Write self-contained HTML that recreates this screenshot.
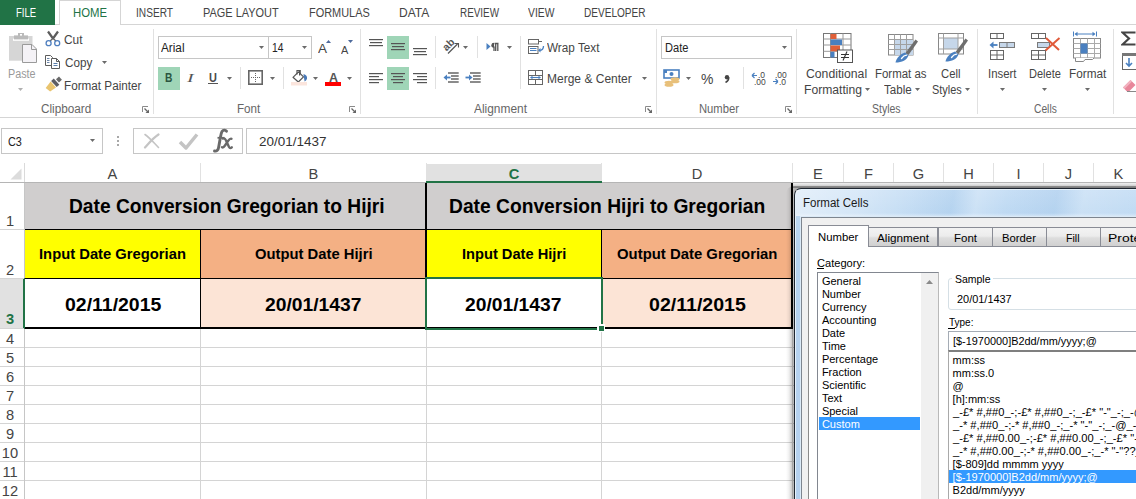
<!DOCTYPE html><html><head><meta charset="utf-8"><style>
html,body{margin:0;padding:0;width:1136px;height:499px;overflow:hidden;background:#fff;font-family:"Liberation Sans",sans-serif;}
.t{position:absolute;white-space:nowrap;line-height:1;}
.r{position:absolute;box-sizing:border-box;}
</style></head><body>
<div class="r" style="left:0px;top:24px;width:1136px;height:1px;background:#d5d5d5"></div>
<div class="r" style="left:0px;top:0px;width:55px;height:25px;background:#217346"></div>
<div class="t" style="left:15.60px;top:7.44px;font-size:12px;color:#fff;font-weight:normal;font-family:'Liberation Sans';transform:scaleX(0.7931);transform-origin:0 0;">FILE</div>
<div class="r" style="left:59px;top:0px;width:62px;height:25px;border:1px solid #d5d5d5;border-bottom:none;background:#fff"></div>
<div class="t" style="left:72.60px;top:7.44px;font-size:12px;color:#217346;font-weight:normal;font-family:'Liberation Sans';transform:scaleX(0.9444);transform-origin:0 0;">HOME</div>
<div class="t" style="left:136.00px;top:7.44px;font-size:12px;color:#444;font-weight:normal;font-family:'Liberation Sans';transform:scaleX(0.8450);transform-origin:0 0;">INSERT</div>
<div class="t" style="left:203.30px;top:7.44px;font-size:12px;color:#444;font-weight:normal;font-family:'Liberation Sans';transform:scaleX(0.9131);transform-origin:0 0;">PAGE LAYOUT</div>
<div class="t" style="left:309.00px;top:7.44px;font-size:12px;color:#444;font-weight:normal;font-family:'Liberation Sans';transform:scaleX(0.9119);transform-origin:0 0;">FORMULAS</div>
<div class="t" style="left:399.40px;top:7.44px;font-size:12px;color:#444;font-weight:normal;font-family:'Liberation Sans';transform:scaleX(1.0024);transform-origin:0 0;">DATA</div>
<div class="t" style="left:459.60px;top:7.44px;font-size:12px;color:#444;font-weight:normal;font-family:'Liberation Sans';transform:scaleX(0.8238);transform-origin:0 0;">REVIEW</div>
<div class="t" style="left:528.20px;top:7.44px;font-size:12px;color:#444;font-weight:normal;font-family:'Liberation Sans';transform:scaleX(0.8607);transform-origin:0 0;">VIEW</div>
<div class="t" style="left:584.30px;top:7.44px;font-size:12px;color:#444;font-weight:normal;font-family:'Liberation Sans';transform:scaleX(0.8384);transform-origin:0 0;">DEVELOPER</div>
<div class="r" style="left:0px;top:117px;width:1136px;height:1px;background:#d5d5d5"></div>
<div class="r" style="left:153px;top:29px;width:1px;height:85px;background:#e1e1e1"></div>
<div class="r" style="left:360px;top:29px;width:1px;height:85px;background:#e1e1e1"></div>
<div class="r" style="left:656px;top:29px;width:1px;height:85px;background:#e1e1e1"></div>
<div class="r" style="left:796px;top:29px;width:1px;height:85px;background:#e1e1e1"></div>
<div class="r" style="left:977px;top:29px;width:1px;height:85px;background:#e1e1e1"></div>
<div class="r" style="left:1113px;top:29px;width:1px;height:85px;background:#e1e1e1"></div>
<div class="r" style="left:240px;top:67px;width:1px;height:22px;background:#e1e1e1"></div>
<div class="r" style="left:283px;top:67px;width:1px;height:22px;background:#e1e1e1"></div>
<div class="r" style="left:435px;top:36px;width:1px;height:22px;background:#e1e1e1"></div>
<div class="r" style="left:435px;top:67px;width:1px;height:22px;background:#e1e1e1"></div>
<div class="r" style="left:477px;top:36px;width:1px;height:22px;background:#e1e1e1"></div>
<div class="r" style="left:520px;top:36px;width:1px;height:53px;background:#e1e1e1"></div>
<div class="r" style="left:743px;top:67px;width:1px;height:22px;background:#e1e1e1"></div>
<div class="t" style="left:41.40px;top:103.44px;font-size:12px;color:#666;font-weight:normal;font-family:'Liberation Sans';transform:scaleX(0.9774);transform-origin:0 0;">Clipboard</div>
<div class="t" style="left:237.30px;top:103.44px;font-size:12px;color:#666;font-weight:normal;font-family:'Liberation Sans';transform:scaleX(0.9703);transform-origin:0 0;">Font</div>
<div class="t" style="left:474.00px;top:103.44px;font-size:12px;color:#666;font-weight:normal;font-family:'Liberation Sans';transform:scaleX(0.9932);transform-origin:0 0;">Alignment</div>
<div class="t" style="left:698.60px;top:103.44px;font-size:12px;color:#666;font-weight:normal;font-family:'Liberation Sans';transform:scaleX(0.9371);transform-origin:0 0;">Number</div>
<div class="t" style="left:872.10px;top:103.44px;font-size:12px;color:#666;font-weight:normal;font-family:'Liberation Sans';transform:scaleX(0.8753);transform-origin:0 0;">Styles</div>
<div class="t" style="left:1033.60px;top:103.44px;font-size:12px;color:#666;font-weight:normal;font-family:'Liberation Sans';transform:scaleX(0.8547);transform-origin:0 0;">Cells</div>
<svg class="r" style="left:142px;top:106px" width="8" height="8" viewBox="0 0 8 8"><path d="M0.5 6V0.5H6" fill="none" stroke="#8a8a8a"/><path d="M2.5 2.5L6.5 6.5" stroke="#666" stroke-width="1.2"/><path d="M3.5 7H7V3.5Z" fill="#666"/></svg>
<svg class="r" style="left:349px;top:106px" width="8" height="8" viewBox="0 0 8 8"><path d="M0.5 6V0.5H6" fill="none" stroke="#8a8a8a"/><path d="M2.5 2.5L6.5 6.5" stroke="#666" stroke-width="1.2"/><path d="M3.5 7H7V3.5Z" fill="#666"/></svg>
<svg class="r" style="left:645px;top:106px" width="8" height="8" viewBox="0 0 8 8"><path d="M0.5 6V0.5H6" fill="none" stroke="#8a8a8a"/><path d="M2.5 2.5L6.5 6.5" stroke="#666" stroke-width="1.2"/><path d="M3.5 7H7V3.5Z" fill="#666"/></svg>
<svg class="r" style="left:785px;top:106px" width="8" height="8" viewBox="0 0 8 8"><path d="M0.5 6V0.5H6" fill="none" stroke="#8a8a8a"/><path d="M2.5 2.5L6.5 6.5" stroke="#666" stroke-width="1.2"/><path d="M3.5 7H7V3.5Z" fill="#666"/></svg>
<svg class="r" style="left:8px;top:32px" width="30" height="32" viewBox="0 0 30 32"><rect x="1" y="4" width="23.5" height="24.7" fill="#d6d6d6"/>
<rect x="5" y="6.6" width="16" height="2.2" fill="#fff"/>
<rect x="6" y="3.4" width="14" height="4" fill="#bababa"/><rect x="10" y="1" width="6" height="3" fill="#bababa"/><rect x="12" y="2" width="2" height="1.6" fill="#fff"/>
<path d="M14.5 12.5H24L28.5 17V30.5H14.5Z" fill="#f4f2f6" stroke="#9a9a9a"/><path d="M23.5 12.5V17.5H28.5" fill="none" stroke="#9a9a9a"/></svg>
<div class="t" style="left:7.60px;top:67.84px;font-size:12px;color:#9a9a9a;font-weight:normal;font-family:'Liberation Sans';transform:scaleX(0.8995);transform-origin:0 0;">Paste</div>
<svg class="r" style="left:18.0px;top:87.5px" width="5" height="3" viewBox="0 0 5 3"><path d="M0 0H5L2.5 3Z" fill="#b0b0b0"/></svg>
<svg class="r" style="left:45px;top:30px" width="16" height="17" viewBox="0 0 16 17"><path d="M3 1.5L8 8.5M13 1.5L8 8.5" stroke="#5c5c5c" stroke-width="2.2" fill="none"/>
<path d="M8 8.5L5 11M8 8.5L11 11" stroke="#5c5c5c" stroke-width="1.2"/>
<circle cx="3.6" cy="13.2" r="2.5" fill="none" stroke="#4f7fbf" stroke-width="1.3"/><circle cx="12.2" cy="13.2" r="2.5" fill="none" stroke="#4f7fbf" stroke-width="1.3"/></svg>
<div class="t" style="left:64.40px;top:34.44px;font-size:12px;color:#444;font-weight:normal;font-family:'Liberation Sans';transform:scaleX(0.9908);transform-origin:0 0;">Cut</div>
<svg class="r" style="left:44px;top:54px" width="17" height="16" viewBox="0 0 17 16"><path d="M1.5 1.5H6.5L8.5 3.5V11.5H1.5Z" fill="#fff" stroke="#5c5c5c"/>
<path d="M3 4.5H5.5M3 6.5H5.5M3 8.5H5.5" stroke="#6d86a8"/>
<path d="M7.5 4.5H12.5L15.5 7.5V14.5H7.5Z" fill="#fff" stroke="#5c5c5c"/><path d="M12.5 4.5V7.5H15.5" fill="none" stroke="#5c5c5c"/>
<path d="M9.5 9.5H13.5M9.5 11.5H13.5" stroke="#5a7eaa"/></svg>
<div class="t" style="left:64.60px;top:57.00px;font-size:12.4px;color:#444;font-weight:normal;font-family:'Liberation Sans';transform:scaleX(0.9433);transform-origin:0 0;">Copy</div>
<svg class="r" style="left:102.0px;top:60.7px" width="5" height="3" viewBox="0 0 5 3"><path d="M0 0H5L2.5 3Z" fill="#6a6a6a"/></svg>
<svg class="r" style="left:42px;top:76px" width="22" height="18" viewBox="0 0 22 18"><g transform="translate(12.8 7.2) rotate(-42)"><path d="M-10 -2.5L-2 -4V4L-9 3Z" fill="#e9c46f"/><rect x="-1.2" y="-4.2" width="3.6" height="8.4" fill="#5d5d63"/><rect x="3.6" y="-2.2" width="4" height="4.4" fill="#6a6a6a"/></g></svg>
<div class="t" style="left:64.40px;top:80.24px;font-size:12px;color:#444;font-weight:normal;font-family:'Liberation Sans';transform:scaleX(0.9766);transform-origin:0 0;">Format Painter</div>
<div class="r" style="left:158px;top:36px;width:111px;height:23px;border:1px solid #c6c6c6;background:#fff"></div>
<div class="r" style="left:268px;top:36px;width:44px;height:23px;border:1px solid #c6c6c6;background:#fff"></div>
<div class="t" style="left:160.90px;top:42.24px;font-size:12px;color:#222;font-weight:normal;font-family:'Liberation Sans';transform:scaleX(0.9787);transform-origin:0 0;">Arial</div>
<div class="t" style="left:271.80px;top:42.24px;font-size:12px;color:#222;font-weight:normal;font-family:'Liberation Sans';transform:scaleX(0.8543);transform-origin:0 0;">14</div>
<svg class="r" style="left:259.0px;top:46.0px" width="5" height="3" viewBox="0 0 5 3"><path d="M0 0H5L2.5 3Z" fill="#6a6a6a"/></svg>
<svg class="r" style="left:302.0px;top:46.0px" width="5" height="3" viewBox="0 0 5 3"><path d="M0 0H5L2.5 3Z" fill="#6a6a6a"/></svg>
<div class="t" style="left:318.40px;top:41.97px;font-size:13.5px;color:#444;font-weight:normal;font-family:'Liberation Sans';transform:scaleX(0.9995);transform-origin:0 0;">A</div>
<svg class="r" style="left:326px;top:40px" width="5" height="3" viewBox="0 0 5 3"><path d="M0 3H5L2.5 0Z" fill="#4e6a9c"/></svg>
<div class="t" style="left:341.20px;top:44.51px;font-size:10.5px;color:#444;font-weight:normal;font-family:'Liberation Sans';transform:scaleX(1.0423);transform-origin:0 0;">A</div>
<svg class="r" style="left:348px;top:40px" width="5" height="3" viewBox="0 0 5 3"><path d="M0 0H5L2.5 3Z" fill="#4e6a9c"/></svg>
<div class="r" style="left:158px;top:67px;width:22px;height:23px;background:#9fd5b7"></div>
<div class="t" style="left:164.70px;top:71.52px;font-size:12.5px;color:#2b5540;font-weight:bold;font-family:'Liberation Sans';transform:scaleX(0.8199);transform-origin:0 0;">B</div>
<div class="t" style="left:187.20px;top:71.52px;font-size:12.5px;color:#555;font-weight:normal;font-family:'Liberation Serif';transform:scaleX(1.6096);transform-origin:0 0;font-style:italic">I</div>
<div class="t" style="left:208.50px;top:71.52px;font-size:12.5px;color:#4a4a4a;font-weight:bold;font-family:'Liberation Sans';transform:scaleX(0.8753);transform-origin:0 0;">U</div>
<div class="r" style="left:207.5px;top:83px;width:10px;height:1px;background:#555"></div>
<svg class="r" style="left:226.9px;top:76.5px" width="5" height="3" viewBox="0 0 5 3"><path d="M0 0H5L2.5 3Z" fill="#6a6a6a"/></svg>
<svg class="r" style="left:247px;top:69px" width="17" height="17" viewBox="0 0 17 17"><rect x="1.8" y="1.8" width="13.4" height="13.4" fill="none" stroke="#666" stroke-width="1.6"/><path d="M8.5 4V13M4 8.5H13" stroke="#666" stroke-dasharray="1 1"/></svg>
<svg class="r" style="left:270.0px;top:76.5px" width="5" height="3" viewBox="0 0 5 3"><path d="M0 0H5L2.5 3Z" fill="#6a6a6a"/></svg>
<svg class="r" style="left:290px;top:66px" width="19" height="20" viewBox="0 0 19 20"><path d="M3 11.3L8.5 5.8L13.5 10.8L8.3 16Z" fill="#fff" stroke="#555" stroke-width="1.2" stroke-linejoin="round"/>
<path d="M7 8.5V4.5H10.2V8M9.6 4.5V9.5" stroke="#555" stroke-width="1.2" fill="none"/>
<path d="M13.5 8C16 8.5 17.5 10.5 17 12.5C16.6 14 15.6 15 14.6 15.5L13.8 10.8Z" fill="#4a7ab8"/>
<rect x="1" y="16" width="16" height="3.5" fill="#fbe5dd"/></svg>
<svg class="r" style="left:313.1px;top:76.5px" width="5" height="3" viewBox="0 0 5 3"><path d="M0 0H5L2.5 3Z" fill="#6a6a6a"/></svg>
<div class="t" style="left:328.70px;top:71.52px;font-size:12.5px;color:#555;font-weight:bold;font-family:'Liberation Sans';transform:scaleX(0.9972);transform-origin:0 0;">A</div>
<div class="r" style="left:325px;top:82px;width:16px;height:4px;background:#ff0000"></div>
<svg class="r" style="left:347.0px;top:76.5px" width="5" height="3" viewBox="0 0 5 3"><path d="M0 0H5L2.5 3Z" fill="#6a6a6a"/></svg>
<div class="r" style="left:387px;top:36px;width:22px;height:23px;background:#9fd5b7"></div>
<div class="r" style="left:387px;top:67px;width:22px;height:23px;background:#9fd5b7"></div>
<svg class="r" style="left:369px;top:39px" width="16" height="14" viewBox="0 0 16 14"><rect x="0" y="0" width="14" height="1.2" fill="#555"/><rect x="1" y="3" width="12" height="1.2" fill="#555"/><rect x="0" y="6" width="14" height="1.2" fill="#555"/></svg>
<svg class="r" style="left:391px;top:43px" width="16" height="14" viewBox="0 0 16 14"><rect x="0" y="0" width="14" height="1.2" fill="#555"/><rect x="1" y="3" width="12" height="1.2" fill="#555"/><rect x="0" y="6" width="14" height="1.2" fill="#555"/></svg>
<svg class="r" style="left:413px;top:48px" width="16" height="14" viewBox="0 0 16 14"><rect x="0" y="0" width="14" height="1.2" fill="#555"/><rect x="1" y="3" width="12" height="1.2" fill="#555"/><rect x="0" y="6" width="14" height="1.2" fill="#555"/></svg>
<svg class="r" style="left:369px;top:73px" width="16" height="14" viewBox="0 0 16 14"><rect x="0" y="0" width="14" height="1.2" fill="#555"/><rect x="0" y="3" width="10" height="1.2" fill="#555"/><rect x="0" y="6" width="14" height="1.2" fill="#555"/><rect x="0" y="9" width="10" height="1.2" fill="#555"/></svg>
<svg class="r" style="left:391px;top:73px" width="16" height="14" viewBox="0 0 16 14"><rect x="0" y="0" width="14" height="1.2" fill="#555"/><rect x="2" y="3" width="10" height="1.2" fill="#555"/><rect x="0" y="6" width="14" height="1.2" fill="#555"/><rect x="2" y="9" width="10" height="1.2" fill="#555"/></svg>
<svg class="r" style="left:413px;top:73px" width="16" height="14" viewBox="0 0 16 14"><rect x="0" y="0" width="14" height="1.2" fill="#555"/><rect x="4" y="3" width="10" height="1.2" fill="#555"/><rect x="0" y="6" width="14" height="1.2" fill="#555"/><rect x="4" y="9" width="10" height="1.2" fill="#555"/></svg>
<svg class="r" style="left:442px;top:38px" width="18" height="17" viewBox="0 0 18 17"><text x="0" y="0" font-size="10.5" font-weight="bold" font-family="Liberation Sans" fill="#555" transform="translate(4.5 13.5) rotate(-45)">ab</text>
<path d="M6 15.5L15.5 6" stroke="#555" stroke-width="1.2"/><path d="M12.5 5.5H16.5V9.5" stroke="#555" stroke-width="1.1" fill="none"/></svg>
<svg class="r" style="left:463.0px;top:46.0px" width="5" height="3" viewBox="0 0 5 3"><path d="M0 0H5L2.5 3Z" fill="#6a6a6a"/></svg>
<svg class="r" style="left:486px;top:42px" width="14" height="10" viewBox="0 0 14 10"><path d="M0.5 1L4.5 4.5L0.5 8Z" fill="#4a80c0"/><path d="M8 1.5C5.5 1.5 5 5 8 5.2V9M8.5 1.5H12.5M9.7 1.5V9M11.8 1.5V9" stroke="#555" stroke-width="1.3" fill="none"/><path d="M8 1.2C5 1.4 5 5.5 8.2 5.4Z" fill="#555"/></svg>
<svg class="r" style="left:507.0px;top:46.0px" width="5" height="3" viewBox="0 0 5 3"><path d="M0 0H5L2.5 3Z" fill="#6a6a6a"/></svg>
<svg class="r" style="left:443px;top:72px" width="17" height="12" viewBox="0 0 17 12"><path d="M5 1H15.7M8 4H15.7M8 7H15.7M5 10H15.7" stroke="#666" stroke-width="1.3"/>
<path d="M0.5 5.5L4 2.5V8.5Z" fill="#4a80c0"/><path d="M3 5.5H7.5" stroke="#4a80c0" stroke-width="1.8"/></svg>
<svg class="r" style="left:465px;top:72px" width="17" height="12" viewBox="0 0 17 12"><path d="M5 1H15.7M8 4H15.7M8 7H15.7M5 10H15.7" stroke="#666" stroke-width="1.3"/>
<path d="M7.5 5.5L4 2.5V8.5Z" fill="#4a80c0"/><path d="M0.5 5.5H5" stroke="#4a80c0" stroke-width="1.8"/></svg>
<svg class="r" style="left:527px;top:38px" width="18" height="17" viewBox="0 0 18 17"><rect x="1.5" y="1.5" width="10" height="4.5" fill="#fff" stroke="#666"/><path d="M11.5 3.5H15" stroke="#666"/>
<rect x="1.5" y="8.5" width="9.5" height="7" fill="#fff" stroke="#666"/><path d="M3 10.5H9.5M3 12.5H9.5" stroke="#4a80c0"/>
<path d="M16.5 8C16.5 11 15 12.3 12.5 12.3" stroke="#4a80c0" stroke-width="1.3" fill="none"/><path d="M11 12.3L13.5 10V14.6Z" fill="#4a80c0"/></svg>
<div class="t" style="left:547.10px;top:42.14px;font-size:12px;color:#444;font-weight:normal;font-family:'Liberation Sans';transform:scaleX(0.9780);transform-origin:0 0;">Wrap Text</div>
<svg class="r" style="left:527px;top:70px" width="17" height="16" viewBox="0 0 17 16"><rect x="1.5" y="0.5" width="14" height="14" fill="#fff" stroke="#666"/><path d="M1.5 5.5H15.5M1.5 9.5H15.5M8.5 0.5V5.5M8.5 9.5V14.5" stroke="#666" fill="none"/>
<path d="M4 7.5H13" stroke="#4a80c0" stroke-width="1.1"/><path d="M3 7.5L5.5 5.8V9.2Z M14 7.5L11.5 5.8V9.2Z" fill="#4a80c0"/></svg>
<div class="t" style="left:547.10px;top:72.94px;font-size:12px;color:#444;font-weight:normal;font-family:'Liberation Sans';transform:scaleX(1.0011);transform-origin:0 0;">Merge &amp; Center</div>
<svg class="r" style="left:641.8px;top:77.0px" width="5" height="3" viewBox="0 0 5 3"><path d="M0 0H5L2.5 3Z" fill="#6a6a6a"/></svg>
<div class="r" style="left:661px;top:36px;width:131px;height:23px;border:1px solid #c6c6c6;background:#fff"></div>
<div class="t" style="left:664.70px;top:42.24px;font-size:12px;color:#222;font-weight:normal;font-family:'Liberation Sans';transform:scaleX(0.9233);transform-origin:0 0;">Date</div>
<svg class="r" style="left:781.8px;top:46.0px" width="5" height="3" viewBox="0 0 5 3"><path d="M0 0H5L2.5 3Z" fill="#6a6a6a"/></svg>
<svg class="r" style="left:663px;top:69px" width="18" height="18" viewBox="0 0 18 18"><rect x="1" y="1" width="15" height="8" fill="#fff" stroke="#4a80c0" stroke-width="1.6"/><circle cx="8.5" cy="5" r="2" fill="#4a80c0"/><rect x="1" y="1" width="3" height="3" fill="#4a80c0"/>
<ellipse cx="12" cy="10" rx="4.5" ry="1.8" fill="#e8c07a"/><ellipse cx="12" cy="12.5" rx="4.5" ry="1.8" fill="#e8c07a"/><ellipse cx="6" cy="13.5" rx="4.5" ry="1.8" fill="#e8c07a"/><ellipse cx="6" cy="16" rx="4.5" ry="1.8" fill="#e8c07a"/></svg>
<svg class="r" style="left:685.5px;top:76.5px" width="5" height="3" viewBox="0 0 5 3"><path d="M0 0H5L2.5 3Z" fill="#6a6a6a"/></svg>
<div class="t" style="left:700.50px;top:72.33px;font-size:14.5px;color:#444;font-weight:normal;font-family:'Liberation Sans';transform:scaleX(0.9619);transform-origin:0 0;">%</div>
<svg class="r" style="left:724px;top:75px" width="6" height="8" viewBox="0 0 6 8"><circle cx="3" cy="2.2" r="2.2" fill="#444"/><path d="M4.8 2.5C4.8 5 3.5 6.5 1.5 7.5" stroke="#444" stroke-width="1.5" fill="none"/></svg>
<svg class="r" style="left:751px;top:71px" width="16" height="14" viewBox="0 0 16 14"><path d="M1 4.5H6M1 4.5L3.5 2M1 4.5L3.5 7" stroke="#4a80c0" stroke-width="1.2" fill="none"/>
<text x="7" y="7" font-size="8.5" font-family="Liberation Sans" fill="#444">.0</text><text x="3" y="13.5" font-size="8.5" font-family="Liberation Sans" fill="#444">.00</text></svg>
<svg class="r" style="left:772px;top:71px" width="16" height="14" viewBox="0 0 16 14"><text x="3" y="7" font-size="8.5" font-family="Liberation Sans" fill="#444">.00</text>
<path d="M1 10.5H6M6 10.5L3.5 8M6 10.5L3.5 13" stroke="#4a80c0" stroke-width="1.2" fill="none"/><text x="7" y="13.5" font-size="8.5" font-family="Liberation Sans" fill="#444">.0</text></svg>
<svg class="r" style="left:822px;top:33px" width="32" height="31" viewBox="0 0 32 31"><rect x="1.5" y="0.5" width="27.5" height="24" fill="#fff" stroke="#777"/>
<path d="M1.5 6H29M1.5 12H29M1.5 18.3H29M8.5 0.5V24.5M21 0.5V24.5" stroke="#999"/>
<rect x="8.5" y="1" width="6" height="5" fill="#e0603a"/><rect x="8.5" y="6.5" width="11.5" height="5.5" fill="#4a80c0"/><rect x="8.5" y="12.5" width="9.5" height="5.8" fill="#e0603a"/><rect x="8.5" y="18.8" width="4" height="5.7" fill="#4a80c0"/>
<rect x="15.5" y="17" width="15" height="12.5" fill="#fff" stroke="#555"/><path d="M19 21.5H27M19 24.5H27M25 18.5L21 27.5" stroke="#333" stroke-width="1.1"/></svg>
<div class="t" style="left:806.30px;top:68.14px;font-size:12px;color:#444;font-weight:normal;font-family:'Liberation Sans';transform:scaleX(1.0177);transform-origin:0 0;">Conditional</div>
<div class="t" style="left:803.50px;top:83.94px;font-size:12px;color:#444;font-weight:normal;font-family:'Liberation Sans';transform:scaleX(1.0114);transform-origin:0 0;">Formatting</div>
<svg class="r" style="left:864.8px;top:88.0px" width="5" height="3" viewBox="0 0 5 3"><path d="M0 0H5L2.5 3Z" fill="#6a6a6a"/></svg>
<svg class="r" style="left:888px;top:34px" width="31" height="30" viewBox="0 0 31 30"><rect x="0.5" y="0.5" width="24.5" height="20.5" fill="#fff" stroke="#888"/><rect x="6.5" y="5.5" width="18.5" height="15.5" fill="#c6d7ea"/>
<path d="M0.5 5.5H25M0.5 10.5H25M0.5 15.5H25M6.5 0.5V21M12.5 0.5V21M18.5 0.5V21" stroke="#a0a0a0"/>
<path d="M17.5 19L27.5 5.5L30 7.5L20.5 21Z" fill="#6e6e6e"/><path d="M7.5 28.5C8.5 24 12 20 17 18.5L20.5 21.5C19 26 14 28.5 7.5 28.5Z" fill="#4a80c0"/><path d="M13.5 24.5C15 22.5 17 21.3 18.5 21.2" stroke="#fff" stroke-width="1.3" fill="none" stroke-linecap="round"/></svg>
<div class="t" style="left:875.30px;top:68.14px;font-size:12px;color:#444;font-weight:normal;font-family:'Liberation Sans';transform:scaleX(0.9535);transform-origin:0 0;">Format as</div>
<div class="t" style="left:884.00px;top:83.94px;font-size:12px;color:#444;font-weight:normal;font-family:'Liberation Sans';transform:scaleX(0.9654);transform-origin:0 0;">Table</div>
<svg class="r" style="left:915.0px;top:88.0px" width="5" height="3" viewBox="0 0 5 3"><path d="M0 0H5L2.5 3Z" fill="#6a6a6a"/></svg>
<svg class="r" style="left:938px;top:33px" width="31" height="31" viewBox="0 0 31 31"><rect x="0.5" y="0.5" width="25" height="20.5" fill="#fff" stroke="#888"/><rect x="5.5" y="5" width="14.5" height="11" fill="#c6d7ea"/>
<path d="M0.5 5H25.5M0.5 16H25.5M5.5 0.5V21M20 0.5V21" stroke="#a0a0a0"/>
<path d="M17.5 19L27.5 5.5L30 7.5L20.5 21Z" fill="#6e6e6e"/><path d="M7.5 28.5C8.5 24 12 20 17 18.5L20.5 21.5C19 26 14 28.5 7.5 28.5Z" fill="#4a80c0"/><path d="M13.5 24.5C15 22.5 17 21.3 18.5 21.2" stroke="#fff" stroke-width="1.3" fill="none" stroke-linecap="round"/></svg>
<div class="t" style="left:941.00px;top:68.14px;font-size:12px;color:#444;font-weight:normal;font-family:'Liberation Sans';transform:scaleX(0.9383);transform-origin:0 0;">Cell</div>
<div class="t" style="left:931.90px;top:83.94px;font-size:12px;color:#444;font-weight:normal;font-family:'Liberation Sans';transform:scaleX(0.9089);transform-origin:0 0;">Styles</div>
<svg class="r" style="left:964.9px;top:88.0px" width="5" height="3" viewBox="0 0 5 3"><path d="M0 0H5L2.5 3Z" fill="#6a6a6a"/></svg>
<svg class="r" style="left:989px;top:33px" width="28" height="28" viewBox="0 0 28 28"><g fill="#fff" stroke="#666"><rect x="1.5" y="0.5" width="13" height="5"/><path d="M8 0.5V5.5"/><rect x="1.5" y="17.5" width="13" height="9"/><path d="M1.5 22H14.5M8 17.5V26.5"/></g>
<rect x="10.5" y="9.5" width="15" height="5" fill="#c6d7ea" stroke="#7a7a7a"/><path d="M18 9.5V14.5" stroke="#7a7a7a"/><path d="M0.5 12L4.5 8.5V15.5Z" fill="#4a80c0"/><path d="M3 12H8.5" stroke="#4a80c0" stroke-width="1.8"/></svg>
<div class="t" style="left:988.00px;top:68.14px;font-size:12px;color:#444;font-weight:normal;font-family:'Liberation Sans';transform:scaleX(0.9496);transform-origin:0 0;">Insert</div>
<svg class="r" style="left:1000.1px;top:88.0px" width="5" height="3" viewBox="0 0 5 3"><path d="M0 0H5L2.5 3Z" fill="#6a6a6a"/></svg>
<svg class="r" style="left:1031px;top:33px" width="30" height="28" viewBox="0 0 30 28"><g fill="#fff" stroke="#666"><rect x="0.5" y="0.5" width="14" height="5"/><path d="M7.5 0.5V5.5"/><rect x="0.5" y="17.5" width="14" height="9"/><path d="M0.5 22H14.5M7.5 17.5V26.5"/></g>
<rect x="6.5" y="9.5" width="12" height="5" fill="#c6d7ea" stroke="#7a7a7a"/><path d="M15 5L28 17M28.5 5L14.5 17.5" stroke="#e05a3a" stroke-width="2"/></svg>
<div class="t" style="left:1028.70px;top:68.14px;font-size:12px;color:#444;font-weight:normal;font-family:'Liberation Sans';transform:scaleX(0.9195);transform-origin:0 0;">Delete</div>
<svg class="r" style="left:1042.0px;top:88.0px" width="5" height="3" viewBox="0 0 5 3"><path d="M0 0H5L2.5 3Z" fill="#6a6a6a"/></svg>
<svg class="r" style="left:1073px;top:31px" width="29" height="32" viewBox="0 0 29 32"><path d="M2.5 3H21.5M0.5 0.5V5.5M23.5 0.5V5.5" stroke="#4a80c0" fill="none"/><path d="M1.5 3L4.5 0.8V5.2Z M22.5 3L19.5 0.8V5.2Z" fill="#4a80c0"/>
<rect x="0.5" y="7.5" width="27" height="19.5" fill="#fff" stroke="#888"/><path d="M0.5 12.5H27.5M0.5 17.5H27.5M0.5 22.5H27.5M7.5 7.5V27M14.5 7.5V27M21.5 7.5V27" stroke="#aaa"/><rect x="7.5" y="12.5" width="7" height="10" fill="#4a80c0"/>
<path d="M2.5 27V30.5H10.5L12 28.5H19.5L21 27" stroke="#888" fill="#fff"/></svg>
<div class="t" style="left:1068.60px;top:68.14px;font-size:12px;color:#444;font-weight:normal;font-family:'Liberation Sans';transform:scaleX(0.9815);transform-origin:0 0;">Format</div>
<svg class="r" style="left:1084.8px;top:88.0px" width="5" height="3" viewBox="0 0 5 3"><path d="M0 0H5L2.5 3Z" fill="#6a6a6a"/></svg>
<svg class="r" style="left:1121px;top:31px" width="15" height="15" viewBox="0 0 15 15"><path d="M14.5 1.5H1.5L8 7.5L1.5 13.5H14.5" stroke="#444" stroke-width="2.2" fill="none" stroke-linejoin="miter"/></svg>
<svg class="r" style="left:1122px;top:53px" width="14" height="17" viewBox="0 0 14 17"><rect x="0.5" y="0.5" width="14" height="16" fill="#fff" stroke="#666"/><rect x="0" y="0" width="14" height="3" fill="#777"/><path d="M7 5V13M4 10L7 13L10 10" stroke="#4a80c0" stroke-width="1.6" fill="none"/></svg>
<svg class="r" style="left:1121px;top:77px" width="15" height="15" viewBox="0 0 15 15"><path d="M2 10.5L9.5 3L14.5 8L7 15.5Z" fill="#e8869a"/><path d="M2 10.5L9.5 3L11 4.5L3.5 12Z" fill="#f2b3c0"/><path d="M6 14.5H15" stroke="#888"/></svg>
<div class="r" style="left:1px;top:128px;width:102px;height:26px;border:1px solid #c6c6c6;background:#fff"></div>
<div class="t" style="left:8.40px;top:136.44px;font-size:12px;color:#222;font-weight:normal;font-family:'Liberation Sans';transform:scaleX(0.9064);transform-origin:0 0;">C3</div>
<svg class="r" style="left:90.0px;top:138.5px" width="5" height="3" viewBox="0 0 5 3"><path d="M0 0H5L2.5 3Z" fill="#6a6a6a"/></svg>
<div class="r" style="left:117px;top:136px;width:2px;height:2px;background:#a8a8a8"></div>
<div class="r" style="left:117px;top:140px;width:2px;height:2px;background:#a8a8a8"></div>
<div class="r" style="left:117px;top:144px;width:2px;height:2px;background:#a8a8a8"></div>
<div class="r" style="left:133px;top:128px;width:110px;height:26px;border:1px solid #c6c6c6;background:#fff"></div>
<svg class="r" style="left:143px;top:133px" width="18" height="17" viewBox="0 0 18 17"><path d="M2 14.5C6 10 10 5 15.5 1.5" stroke="#c4c4c4" stroke-width="2.2" fill="none" stroke-linecap="round"/><path d="M2 1.5C7 5 11 10 15.5 14.5" stroke="#c4c4c4" stroke-width="1.6" fill="none" stroke-linecap="round"/></svg>
<svg class="r" style="left:178px;top:133px" width="21" height="17" viewBox="0 0 21 17"><path d="M2 9L8 15L19 1.5" stroke="#c4c4c4" stroke-width="3.5" fill="none" stroke-linejoin="round"/></svg>
<svg class="r" style="left:212px;top:128px" width="22" height="25" viewBox="0 0 22 25"><path d="M14.5 3.2C13.5 1.8 11.2 1.6 10 3.5C9.2 4.8 8.8 7 8.4 9.5L6.6 19.5C6.2 21.8 5 23.5 2.5 23" stroke="#6a6a6a" stroke-width="2.9" fill="none" stroke-linecap="round"/><path d="M5.5 9.8H12.5" stroke="#6a6a6a" stroke-width="1.8"/><path d="M11 10.5C12.5 10 13.5 11 14.5 13.5L17 19C17.8 20.5 18.8 20.2 19.8 19.3M19.5 10.8C18.5 10.3 17.5 11 16 13L13 17.5C12 19 11 19.8 10 19.2" stroke="#6a6a6a" stroke-width="2.4" fill="none" stroke-linecap="round"/></svg>
<div class="r" style="left:246px;top:128px;width:900px;height:26px;border:1px solid #c6c6c6;background:#fff"></div>
<div class="t" style="left:258.50px;top:134.64px;font-size:13.3px;color:#333;font-weight:normal;font-family:'Liberation Sans';transform:scaleX(1.0140);transform-origin:0 0;">20/01/1437</div>
<div class="r" style="left:24px;top:163px;width:1px;height:20px;background:#dadada"></div>
<div class="r" style="left:24px;top:183px;width:1px;height:316px;background:#c6c6c6"></div>
<div class="r" style="left:0px;top:182px;width:1136px;height:1px;background:#b5b5b5"></div>
<svg class="r" style="left:10px;top:168px" width="12" height="12" viewBox="0 0 12 12"><path d="M11.5 0.5V11.5H0.5Z" fill="#dcdcdc"/></svg>
<div class="r" style="left:427px;top:164px;width:175px;height:17px;background:#e1e1e1"></div>
<div class="r" style="left:200px;top:163px;width:1px;height:19px;background:#e1e1e1"></div>
<div class="r" style="left:426px;top:163px;width:1px;height:19px;background:#e1e1e1"></div>
<div class="r" style="left:601px;top:163px;width:1px;height:19px;background:#e1e1e1"></div>
<div class="r" style="left:792px;top:163px;width:1px;height:19px;background:#e1e1e1"></div>
<div class="r" style="left:843px;top:163px;width:1px;height:19px;background:#e1e1e1"></div>
<div class="r" style="left:893px;top:163px;width:1px;height:19px;background:#e1e1e1"></div>
<div class="r" style="left:943px;top:163px;width:1px;height:19px;background:#e1e1e1"></div>
<div class="r" style="left:993px;top:163px;width:1px;height:19px;background:#e1e1e1"></div>
<div class="r" style="left:1043px;top:163px;width:1px;height:19px;background:#e1e1e1"></div>
<div class="r" style="left:1093px;top:163px;width:1px;height:19px;background:#e1e1e1"></div>
<div class="r" style="left:426px;top:181px;width:176px;height:2px;background:#217346"></div>
<div class="t" style="left:-187.5px;width:600px;text-align:center;top:166.68px;font-size:14.67px;color:#444;font-weight:normal;font-family:'Liberation Sans';">A</div>
<div class="t" style="left:13.5px;width:600px;text-align:center;top:166.68px;font-size:14.67px;color:#444;font-weight:normal;font-family:'Liberation Sans';">B</div>
<div class="t" style="left:214.0px;width:600px;text-align:center;top:166.68px;font-size:14.67px;color:#217346;font-weight:bold;font-family:'Liberation Sans';">C</div>
<div class="t" style="left:397.0px;width:600px;text-align:center;top:166.68px;font-size:14.67px;color:#444;font-weight:normal;font-family:'Liberation Sans';">D</div>
<div class="t" style="left:518.0px;width:600px;text-align:center;top:166.68px;font-size:14.67px;color:#444;font-weight:normal;font-family:'Liberation Sans';">E</div>
<div class="t" style="left:568.5px;width:600px;text-align:center;top:166.68px;font-size:14.67px;color:#444;font-weight:normal;font-family:'Liberation Sans';">F</div>
<div class="t" style="left:618.5px;width:600px;text-align:center;top:166.68px;font-size:14.67px;color:#444;font-weight:normal;font-family:'Liberation Sans';">G</div>
<div class="t" style="left:668.5px;width:600px;text-align:center;top:166.68px;font-size:14.67px;color:#444;font-weight:normal;font-family:'Liberation Sans';">H</div>
<div class="t" style="left:718.5px;width:600px;text-align:center;top:166.68px;font-size:14.67px;color:#444;font-weight:normal;font-family:'Liberation Sans';">I</div>
<div class="t" style="left:768.5px;width:600px;text-align:center;top:166.68px;font-size:14.67px;color:#444;font-weight:normal;font-family:'Liberation Sans';">J</div>
<div class="t" style="left:818.5px;width:600px;text-align:center;top:166.68px;font-size:14.67px;color:#444;font-weight:normal;font-family:'Liberation Sans';">K</div>
<div class="r" style="left:0px;top:279px;width:23px;height:49px;background:#e1e1e1"></div>
<div class="r" style="left:23px;top:278px;width:2px;height:51px;background:#217346"></div>
<div class="r" style="left:0px;top:229px;width:24px;height:1px;background:#d4d4d4"></div>
<div class="t" style="left:-290px;width:600px;text-align:center;top:213.68px;font-size:14.67px;color:#444;font-weight:normal;font-family:'Liberation Sans';">1</div>
<div class="r" style="left:0px;top:278px;width:24px;height:1px;background:#d4d4d4"></div>
<div class="t" style="left:-290px;width:600px;text-align:center;top:262.68px;font-size:14.67px;color:#444;font-weight:normal;font-family:'Liberation Sans';">2</div>
<div class="r" style="left:0px;top:328px;width:24px;height:1px;background:#d4d4d4"></div>
<div class="t" style="left:-290px;width:600px;text-align:center;top:311.68px;font-size:14.67px;color:#217346;font-weight:bold;font-family:'Liberation Sans';">3</div>
<div class="r" style="left:0px;top:347px;width:24px;height:1px;background:#d4d4d4"></div>
<div class="t" style="left:-290px;width:600px;text-align:center;top:331.68px;font-size:14.67px;color:#444;font-weight:normal;font-family:'Liberation Sans';">4</div>
<div class="r" style="left:0px;top:366px;width:24px;height:1px;background:#d4d4d4"></div>
<div class="t" style="left:-290px;width:600px;text-align:center;top:350.68px;font-size:14.67px;color:#444;font-weight:normal;font-family:'Liberation Sans';">5</div>
<div class="r" style="left:0px;top:385px;width:24px;height:1px;background:#d4d4d4"></div>
<div class="t" style="left:-290px;width:600px;text-align:center;top:369.68px;font-size:14.67px;color:#444;font-weight:normal;font-family:'Liberation Sans';">6</div>
<div class="r" style="left:0px;top:404px;width:24px;height:1px;background:#d4d4d4"></div>
<div class="t" style="left:-290px;width:600px;text-align:center;top:388.68px;font-size:14.67px;color:#444;font-weight:normal;font-family:'Liberation Sans';">7</div>
<div class="r" style="left:0px;top:423px;width:24px;height:1px;background:#d4d4d4"></div>
<div class="t" style="left:-290px;width:600px;text-align:center;top:407.68px;font-size:14.67px;color:#444;font-weight:normal;font-family:'Liberation Sans';">8</div>
<div class="r" style="left:0px;top:442px;width:24px;height:1px;background:#d4d4d4"></div>
<div class="t" style="left:-290px;width:600px;text-align:center;top:426.68px;font-size:14.67px;color:#444;font-weight:normal;font-family:'Liberation Sans';">9</div>
<div class="r" style="left:0px;top:461px;width:24px;height:1px;background:#d4d4d4"></div>
<div class="t" style="left:-290px;width:600px;text-align:center;top:445.68px;font-size:14.67px;color:#444;font-weight:normal;font-family:'Liberation Sans';">10</div>
<div class="r" style="left:0px;top:480px;width:24px;height:1px;background:#d4d4d4"></div>
<div class="t" style="left:-290px;width:600px;text-align:center;top:464.68px;font-size:14.67px;color:#444;font-weight:normal;font-family:'Liberation Sans';">11</div>
<div class="r" style="left:0px;top:499px;width:24px;height:1px;background:#d4d4d4"></div>
<div class="t" style="left:-290px;width:600px;text-align:center;top:483.68px;font-size:14.67px;color:#444;font-weight:normal;font-family:'Liberation Sans';">12</div>
<div class="r" style="left:25px;top:347px;width:1111px;height:1px;background:#d4d4d4"></div>
<div class="r" style="left:25px;top:366px;width:1111px;height:1px;background:#d4d4d4"></div>
<div class="r" style="left:25px;top:385px;width:1111px;height:1px;background:#d4d4d4"></div>
<div class="r" style="left:25px;top:404px;width:1111px;height:1px;background:#d4d4d4"></div>
<div class="r" style="left:25px;top:423px;width:1111px;height:1px;background:#d4d4d4"></div>
<div class="r" style="left:25px;top:442px;width:1111px;height:1px;background:#d4d4d4"></div>
<div class="r" style="left:25px;top:461px;width:1111px;height:1px;background:#d4d4d4"></div>
<div class="r" style="left:25px;top:480px;width:1111px;height:1px;background:#d4d4d4"></div>
<div class="r" style="left:25px;top:499px;width:1111px;height:1px;background:#d4d4d4"></div>
<div class="r" style="left:200px;top:329px;width:1px;height:170px;background:#d4d4d4"></div>
<div class="r" style="left:426px;top:329px;width:1px;height:170px;background:#d4d4d4"></div>
<div class="r" style="left:601px;top:329px;width:1px;height:170px;background:#d4d4d4"></div>
<div class="r" style="left:792px;top:329px;width:1px;height:170px;background:#d4d4d4"></div>
<div class="r" style="left:843px;top:329px;width:1px;height:170px;background:#d4d4d4"></div>
<div class="r" style="left:893px;top:329px;width:1px;height:170px;background:#d4d4d4"></div>
<div class="r" style="left:943px;top:329px;width:1px;height:170px;background:#d4d4d4"></div>
<div class="r" style="left:993px;top:329px;width:1px;height:170px;background:#d4d4d4"></div>
<div class="r" style="left:1043px;top:329px;width:1px;height:170px;background:#d4d4d4"></div>
<div class="r" style="left:1093px;top:329px;width:1px;height:170px;background:#d4d4d4"></div>
<div class="r" style="left:25px;top:183px;width:767px;height:46px;background:#d0cece"></div>
<div class="r" style="left:25px;top:230px;width:175px;height:48px;background:#ffff00"></div>
<div class="r" style="left:201px;top:230px;width:225px;height:48px;background:#f4b084"></div>
<div class="r" style="left:427px;top:230px;width:174px;height:48px;background:#ffff00"></div>
<div class="r" style="left:602px;top:230px;width:190px;height:48px;background:#f4b084"></div>
<div class="r" style="left:25px;top:279px;width:175px;height:48px;background:#fff"></div>
<div class="r" style="left:201px;top:279px;width:225px;height:48px;background:#fce4d6"></div>
<div class="r" style="left:427px;top:279px;width:174px;height:48px;background:#fff"></div>
<div class="r" style="left:602px;top:279px;width:190px;height:48px;background:#fce4d6"></div>
<div class="r" style="left:25px;top:229px;width:767px;height:1px;background:#000"></div>
<div class="r" style="left:25px;top:278px;width:767px;height:1px;background:#000"></div>
<div class="r" style="left:25px;top:327px;width:767px;height:2px;background:#000"></div>
<div class="r" style="left:200px;top:229px;width:1px;height:99px;background:#000"></div>
<div class="r" style="left:425px;top:183px;width:2px;height:145px;background:#000"></div>
<div class="r" style="left:601px;top:229px;width:1px;height:99px;background:#000"></div>
<div class="r" style="left:791px;top:183px;width:2px;height:146px;background:#000"></div>
<div class="r" style="left:425px;top:277px;width:178px;height:53px;border:2px solid #217346"></div>
<div class="r" style="left:597px;top:324px;width:8px;height:8px;background:#fff"></div>
<div class="r" style="left:599px;top:326px;width:5px;height:5px;background:#217346"></div>
<div class="t" style="left:68.60px;top:196.89px;font-size:19.5px;color:#000;font-weight:bold;font-family:'Liberation Sans';transform:scaleX(0.9840);transform-origin:0 0;">Date Conversion Gregorian to Hijri</div>
<div class="t" style="left:449.00px;top:196.89px;font-size:19.5px;color:#000;font-weight:bold;font-family:'Liberation Sans';transform:scaleX(0.9862);transform-origin:0 0;">Date Conversion Hijri to Gregorian</div>
<div class="t" style="left:39.00px;top:246.78px;font-size:14.67px;color:#000;font-weight:bold;font-family:'Liberation Sans';transform:scaleX(1.0083);transform-origin:0 0;">Input Date Gregorian</div>
<div class="t" style="left:254.80px;top:246.78px;font-size:14.67px;color:#000;font-weight:bold;font-family:'Liberation Sans';transform:scaleX(1.0091);transform-origin:0 0;">Output Date Hijri</div>
<div class="t" style="left:461.90px;top:246.78px;font-size:14.67px;color:#000;font-weight:bold;font-family:'Liberation Sans';transform:scaleX(0.9998);transform-origin:0 0;">Input Date Hijri</div>
<div class="t" style="left:616.70px;top:246.78px;font-size:14.67px;color:#000;font-weight:bold;font-family:'Liberation Sans';transform:scaleX(1.0157);transform-origin:0 0;">Output Date Gregorian</div>
<div class="t" style="left:64.70px;top:295.05px;font-size:19.2px;color:#000;font-weight:bold;font-family:'Liberation Sans';transform:scaleX(1.0143);transform-origin:0 0;">02/11/2015</div>
<div class="t" style="left:265.40px;top:295.05px;font-size:19.2px;color:#000;font-weight:bold;font-family:'Liberation Sans';transform:scaleX(1.0042);transform-origin:0 0;">20/01/1437</div>
<div class="t" style="left:465.40px;top:295.05px;font-size:19.2px;color:#000;font-weight:bold;font-family:'Liberation Sans';transform:scaleX(1.0042);transform-origin:0 0;">20/01/1437</div>
<div class="t" style="left:648.50px;top:295.05px;font-size:19.2px;color:#000;font-weight:bold;font-family:'Liberation Sans';transform:scaleX(1.0196);transform-origin:0 0;">02/11/2015</div>
<div class="r" style="left:786px;top:186px;width:350px;height:313px;background:linear-gradient(90deg,rgba(0,0,0,0) 0px,rgba(0,0,0,0.06) 3px,rgba(0,0,0,0.3) 8px);border-radius:8px 0 0 0"></div>
<div class="r" style="left:793px;top:183px;width:343px;height:5px;background:linear-gradient(180deg,rgba(0,0,0,0.06) 0px,rgba(0,0,0,0.14) 2px,rgba(0,0,0,0.32) 5px)"></div>
<div class="r" style="left:794px;top:188px;width:342px;height:311px;background:#1e2630;border-radius:7px 0 0 0"></div>
<div class="r" style="left:795px;top:189px;width:341px;height:310px;background:#e6f2fb;border-radius:6px 0 0 0"></div>
<div class="r" style="left:796px;top:190px;width:340px;height:309px;background:linear-gradient(180deg,#c6def5 0px,#bcd8f2 26px,#b6d3ef 60px,#b4d0ee 100%);border-radius:5px 0 0 0"></div>
<div class="r" style="left:796px;top:190px;width:340px;height:26px;background:linear-gradient(100deg,rgba(255,255,255,0.55) 0%,rgba(255,255,255,0.35) 18%,rgba(255,255,255,0.12) 32%,rgba(120,170,215,0.12) 46%,rgba(255,255,255,0.22) 53%,rgba(255,255,255,0.02) 62%,rgba(130,175,220,0.15) 76%,rgba(255,255,255,0.2) 84%,rgba(255,255,255,0.05) 100%)"></div>
<div class="r" style="left:796px;top:213px;width:340px;height:3px;background:linear-gradient(180deg,rgba(255,255,255,0),rgba(255,255,255,0.35))"></div>
<div class="r" style="left:800px;top:216px;width:336px;height:283px;background:#dbeaf7"></div>
<div class="t" style="left:802.70px;top:196.92px;font-size:12.5px;color:#1a1a1a;font-weight:normal;font-family:'Liberation Sans';transform:scaleX(0.9231);transform-origin:0 0;">Format Cells</div>
<div class="r" style="left:801px;top:217px;width:345px;height:300px;background:#f0f0f0;border:1px solid #7d858f;border-right:none;border-bottom:none"></div>
<div class="r" style="left:808px;top:246px;width:340px;height:270px;background:#fff;border:1px solid #8a8a8a;border-right:none;border-bottom:none"></div>
<div class="r" style="left:868px;top:227px;width:70px;height:20px;border:1px solid #898c95;background:linear-gradient(180deg,#f3f3f3 0%,#ececec 45%,#dddddd 55%,#d0d0d0 100%)"></div>
<div class="t" style="left:876.50px;top:232.89px;font-size:11px;color:#000;font-weight:normal;font-family:'Liberation Sans';transform:scaleX(1.0651);transform-origin:0 0;">Alignment</div>
<div class="r" style="left:938px;top:227px;width:55px;height:20px;border:1px solid #898c95;background:linear-gradient(180deg,#f3f3f3 0%,#ececec 45%,#dddddd 55%,#d0d0d0 100%)"></div>
<div class="t" style="left:953.60px;top:232.89px;font-size:11px;color:#000;font-weight:normal;font-family:'Liberation Sans';transform:scaleX(1.0449);transform-origin:0 0;">Font</div>
<div class="r" style="left:992px;top:227px;width:55px;height:20px;border:1px solid #898c95;background:linear-gradient(180deg,#f3f3f3 0%,#ececec 45%,#dddddd 55%,#d0d0d0 100%)"></div>
<div class="t" style="left:1001.90px;top:232.89px;font-size:11px;color:#000;font-weight:normal;font-family:'Liberation Sans';transform:scaleX(1.0266);transform-origin:0 0;">Border</div>
<div class="r" style="left:1046px;top:227px;width:55px;height:20px;border:1px solid #898c95;background:linear-gradient(180deg,#f3f3f3 0%,#ececec 45%,#dddddd 55%,#d0d0d0 100%)"></div>
<div class="t" style="left:1065.60px;top:232.89px;font-size:11px;color:#000;font-weight:normal;font-family:'Liberation Sans';transform:scaleX(0.9682);transform-origin:0 0;">Fill</div>
<div class="r" style="left:1100px;top:227px;width:61px;height:20px;border:1px solid #898c95;background:linear-gradient(180deg,#f3f3f3 0%,#ececec 45%,#dddddd 55%,#d0d0d0 100%)"></div>
<div class="t" style="left:1108.40px;top:232.89px;font-size:11px;color:#000;font-weight:normal;font-family:'Liberation Sans';transform:scaleX(1.2641);transform-origin:0 0;">Protection</div>
<div class="r" style="left:808px;top:225px;width:61px;height:22px;border:1px solid #898c95;border-bottom:none;background:#fff"></div>
<div class="t" style="left:817.70px;top:231.99px;font-size:11px;color:#000;font-weight:normal;font-family:'Liberation Sans';transform:scaleX(1.0300);transform-origin:0 0;">Number</div>
<div class="t" style="left:817.30px;top:257.89px;font-size:11px;color:#000;font-weight:normal;font-family:'Liberation Sans';transform:scaleX(1.0087);transform-origin:0 0;">Category:</div>
<div class="r" style="left:817px;top:268px;width:7px;height:1px;background:#000"></div>
<div class="r" style="left:817px;top:272px;width:122px;height:240px;border:1px solid #828790;border-right-color:#b9b9b9;background:#fff"></div>
<div class="r" style="left:921px;top:273px;width:17px;height:240px;background:#f0f0f0"></div>
<svg class="r" style="left:926px;top:280px" width="7" height="4" viewBox="0 0 7 4"><path d="M0 4L3.5 0L7 4Z" fill="#8a8a8a"/></svg>
<div class="r" style="left:819px;top:417px;width:101px;height:13px;background:#3399ff"></div>
<div class="t" style="left:821.9px;top:276.09px;font-size:11px;color:#000;font-weight:normal;font-family:'Liberation Sans';">General</div>
<div class="t" style="left:821.9px;top:289.09px;font-size:11px;color:#000;font-weight:normal;font-family:'Liberation Sans';">Number</div>
<div class="t" style="left:821.9px;top:302.09px;font-size:11px;color:#000;font-weight:normal;font-family:'Liberation Sans';">Currency</div>
<div class="t" style="left:821.9px;top:315.09px;font-size:11px;color:#000;font-weight:normal;font-family:'Liberation Sans';">Accounting</div>
<div class="t" style="left:821.9px;top:328.09px;font-size:11px;color:#000;font-weight:normal;font-family:'Liberation Sans';">Date</div>
<div class="t" style="left:821.9px;top:341.09px;font-size:11px;color:#000;font-weight:normal;font-family:'Liberation Sans';">Time</div>
<div class="t" style="left:821.9px;top:354.09px;font-size:11px;color:#000;font-weight:normal;font-family:'Liberation Sans';">Percentage</div>
<div class="t" style="left:821.9px;top:367.09px;font-size:11px;color:#000;font-weight:normal;font-family:'Liberation Sans';">Fraction</div>
<div class="t" style="left:821.9px;top:380.09px;font-size:11px;color:#000;font-weight:normal;font-family:'Liberation Sans';">Scientific</div>
<div class="t" style="left:821.9px;top:393.09px;font-size:11px;color:#000;font-weight:normal;font-family:'Liberation Sans';">Text</div>
<div class="t" style="left:821.9px;top:406.09px;font-size:11px;color:#000;font-weight:normal;font-family:'Liberation Sans';">Special</div>
<div class="t" style="left:821.9px;top:419.09px;font-size:11px;color:#fff;font-weight:normal;font-family:'Liberation Sans';">Custom</div>
<div class="r" style="left:948px;top:278px;width:200px;height:32px;border:1px solid #d5dfe5;border-radius:3px"></div>
<div class="r" style="left:952px;top:276px;width:41px;height:6px;background:#fff"></div>
<div class="t" style="left:954.80px;top:274.29px;font-size:11px;color:#000;font-weight:normal;font-family:'Liberation Sans';transform:scaleX(0.9517);transform-origin:0 0;">Sample</div>
<div class="t" style="left:957.40px;top:294.09px;font-size:11px;color:#000;font-weight:normal;font-family:'Liberation Sans';transform:scaleX(0.9936);transform-origin:0 0;">20/01/1437</div>
<div class="t" style="left:948.60px;top:316.99px;font-size:11px;color:#000;font-weight:normal;font-family:'Liberation Sans';transform:scaleX(0.9069);transform-origin:0 0;">Type:</div>
<div class="r" style="left:948px;top:328px;width:7px;height:1px;background:#000"></div>
<div class="r" style="left:948px;top:331px;width:200px;height:20px;border:1px solid #a5acb5;background:#fff"></div>
<div class="t" style="left:952.60px;top:336.09px;font-size:11px;color:#000;font-weight:normal;font-family:'Liberation Sans';transform:scaleX(0.9906);transform-origin:0 0;">[$-1970000]B2dd/mm/yyyy;@</div>
<div class="r" style="left:948px;top:350px;width:200px;height:160px;border:1px solid #a9a9a9;border-top:2px solid #7f7f7f;background:#fff"></div>
<div class="r" style="left:949px;top:470px;width:187px;height:13px;background:#3399ff"></div>
<div class="t" style="left:952.6px;top:354.89px;font-size:11px;color:#000;font-weight:normal;font-family:'Liberation Sans';transform:scaleX(1.0);transform-origin:0 0">mm:ss</div>
<div class="t" style="left:952.6px;top:367.89px;font-size:11px;color:#000;font-weight:normal;font-family:'Liberation Sans';transform:scaleX(1.0);transform-origin:0 0">mm:ss.0</div>
<div class="t" style="left:952.6px;top:380.89px;font-size:11px;color:#000;font-weight:normal;font-family:'Liberation Sans';transform:scaleX(1.0);transform-origin:0 0">@</div>
<div class="t" style="left:952.6px;top:393.89px;font-size:11px;color:#000;font-weight:normal;font-family:'Liberation Sans';transform:scaleX(1.0);transform-origin:0 0">[h]:mm:ss</div>
<div class="t" style="left:952.6px;top:406.89px;font-size:11px;color:#000;font-weight:normal;font-family:'Liberation Sans';transform:scaleX(1.013);transform-origin:0 0">_-£* #,##0_-;-£* #,##0_-;_-£* &quot;-&quot;_-;_-@_-</div>
<div class="t" style="left:952.6px;top:419.89px;font-size:11px;color:#000;font-weight:normal;font-family:'Liberation Sans';transform:scaleX(1.013);transform-origin:0 0">_-* #,##0_-;-* #,##0_-;_-* &quot;-&quot;_-;_-@_-</div>
<div class="t" style="left:952.6px;top:432.89px;font-size:11px;color:#000;font-weight:normal;font-family:'Liberation Sans';transform:scaleX(1.013);transform-origin:0 0">_-£* #,##0.00_-;-£* #,##0.00_-;_-£* &quot;-&quot;??_-;_-@_-</div>
<div class="t" style="left:952.6px;top:445.89px;font-size:11px;color:#000;font-weight:normal;font-family:'Liberation Sans';transform:scaleX(1.013);transform-origin:0 0">_-* #,##0.00_-;-* #,##0.00_-;_-* &quot;-&quot;??_-;_-@_-</div>
<div class="t" style="left:952.6px;top:458.89px;font-size:11px;color:#000;font-weight:normal;font-family:'Liberation Sans';transform:scaleX(1.0);transform-origin:0 0">[$-809]dd mmmm yyyy</div>
<div class="t" style="left:952.6px;top:471.89px;font-size:11px;color:#fff;font-weight:normal;font-family:'Liberation Sans';transform:scaleX(1.0);transform-origin:0 0">[$-1970000]B2dd/mm/yyyy;@</div>
<div class="t" style="left:952.6px;top:484.89px;font-size:11px;color:#000;font-weight:normal;font-family:'Liberation Sans';transform:scaleX(1.0);transform-origin:0 0">B2dd/mm/yyyy</div>
</body></html>
